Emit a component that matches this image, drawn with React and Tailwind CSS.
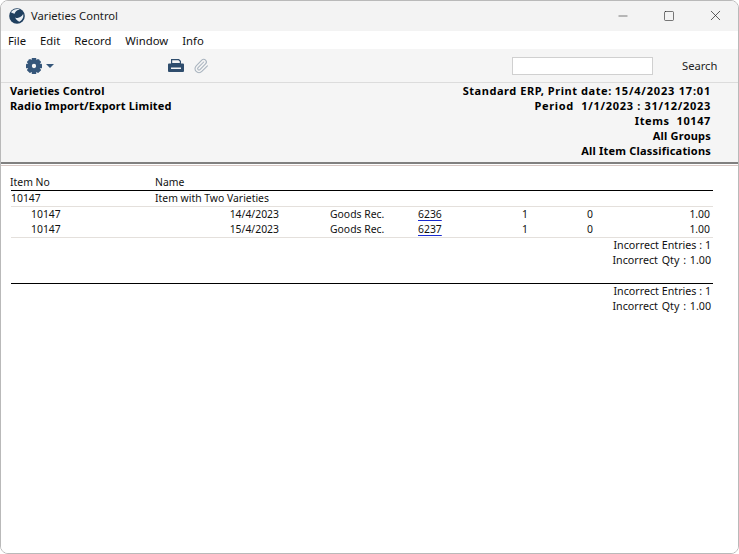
import React from 'react';
import { Minus, Paperclip, Square, X } from 'lucide-react';

function GearIcon() {
  const angles = [0, 45, 90, 135, 180, 225, 270, 315];
  return (
    <svg width="16" height="16" viewBox="0 0 24 24" fill="#35567a">
      {angles.map((a) => (
        <rect key={a} x="8.500" y="0" width="7" height="6" rx="1" transform={`rotate(${a} 12 12)`} />
      ))}
      <circle cx="12" cy="12" r="6.500" fill="none" stroke="#35567a" strokeWidth="6.500" />
    </svg>
  );
}

function PrintIcon() {
  return (
    <svg width="16" height="13" viewBox="0 0 16 13">
      <path d="M3 0h8l2 2v3H3zM4.200 1.200v2.800h7.600V2.600l-1.400-1.400z" fillRule="evenodd" fill="#2f4d6d" />
      <path d="M1 4.500h14a1 1 0 0 1 1 1V12a1 1 0 0 1-1 1H1a1 1 0 0 1-1-1V5.500a1 1 0 0 1 1-1z" fill="#2f4d6d" />
      <path d="M3 8.500h10v1.500H3z" fill="#f5f5f5" />
    </svg>
  );
}

function AppLogo() {
  return (
    <svg width="16" height="16" viewBox="0 0 17 17">
      <circle cx="8.500" cy="8.500" r="8.300" fill="#1f3f5f" />
      <path d="M2 4.500C4.500 1.500 8 .5 11.500 1.500 8.500 2 6.500 3.500 6 6c-1 0-2.500-.5-4-1.500z" fill="#e8eef4" />
      <path d="M6.500 10c3 1.300 6.500.3 8.500-3.500.8 3-.5 6.500-4 8-2-.8-3.800-2.500-4.500-4.500z" fill="#e8eef4" />
    </svg>
  );
}

function Row({ no, date, num }) {
  return (
    <div className="flex h-[15px] items-center">
      <span className="w-[125px] pl-[20px]">{no}</span>
      <span className="w-[143px] text-right">{date}</span>
      <span className="ml-[51px] w-[88px]">Goods Rec.</span>
      <span className="w-[60px] underline decoration-[#1a2bd0] underline-offset-[2px]">{num}</span>
      <span className="w-[50px] text-right">1</span>
      <span className="w-[65px] text-right">0</span>
      <span className="flex-1 pr-[3px] text-right">1.00</span>
    </div>
  );
}

function Totals() {
  return (
    <>
      <div className="h-[15px] text-[10.7px]">Incorrect Entries : 1</div>
      <div className="h-[15px] text-[10.7px] [word-spacing:1px]">Incorrect Qty : 1.00</div>
    </>
  );
}

export default function App() {
  return (
    <div className="flex h-[554px] w-[739px] flex-col overflow-hidden rounded-lg border border-[#b9b9b9] bg-white font-['Noto_Sans','Liberation_Sans',sans-serif] text-[10.4px] leading-[15px] text-[#111]">
      {/* title bar */}
      <div className="flex h-[30px] items-center bg-[#f3f3f3] pb-[1px]">
        <span className="ml-[8px] mr-[6px] flex"><AppLogo /></span>
        <span className="font-['Open_Sans',sans-serif] text-[11.2px] text-[#1a1a1a]">Varieties Control</span>
        <div className="ml-auto flex items-center text-[#222]">
          <span className="flex w-[46px] justify-center"><Minus size={14} strokeWidth={1} /></span>
          <span className="flex w-[46px] justify-center"><Square size={12} strokeWidth={1.2} /></span>
          <span className="flex w-[46px] justify-center"><X size={17} strokeWidth={1} /></span>
        </div>
      </div>

      {/* menu */}
      <div className="flex h-[18px] items-center gap-[14px] bg-white pl-[7px] font-['Open_Sans',sans-serif] text-[11.3px]">
        <span>File</span>
        <span>Edit</span>
        <span>Record</span>
        <span>Window</span>
        <span>Info</span>
      </div>

      {/* toolbar */}
      <div className="flex h-[34px] items-center border-b border-[#dcdcdc] bg-[#f5f5f5]">
        <span className="ml-[25px] flex"><GearIcon /></span>
        <span className="ml-[4px] h-0 w-0 border-x-[4px] border-t-[4px] border-x-transparent border-t-[#35567a]" />
        <span className="ml-[114px] flex"><PrintIcon /></span>
        <span className="ml-[9px] flex text-[#a9b4bf]"><Paperclip size={16} strokeWidth={1.6} /></span>
        <input className="ml-auto h-[18px] w-[141px] border border-[#d0d0d0] bg-white" />
        <span className="ml-[29px] mr-[22px] w-[34px] font-['Open_Sans',sans-serif] text-[11.2px] text-[#222]">Search</span>
      </div>

      {/* report header */}
      <div className="flex h-[81px] justify-between border-b-2 border-[#808080] bg-[#f5f5f5] pl-[9px] pr-[27px] text-[11px] font-bold text-black">
        <div className="tracking-[0.15px]">
          <div>Varieties Control</div>
          <div>Radio Import/Export Limited</div>
        </div>
        <div className="text-right">
          <div>
            <span className="tracking-[0.56px]">Standard ERP, Print date:</span>{' '}
            <span className="tracking-[0.8px]">15/4/2023 17:01</span>
          </div>
          <div className="tracking-[0.7px]">Period&nbsp; 1/1/2023 : 31/12/2023</div>
          <div className="tracking-[0.6px]">Items&nbsp; 10147</div>
          <div className="tracking-[0.2px]">All Groups</div>
          <div className="tracking-[0.2px]">All Item Classifications</div>
        </div>
      </div>
      <div className="mt-[1px] h-[1px] bg-[#d8c8c4]" />

      {/* report body */}
      <div className="flex-1 bg-white pl-[10px] pr-[25px] pt-[8px]">
        <div className="-ml-[1px] flex h-[16px] items-center">
          <span className="w-[145px]">Item No</span>
          <span>Name</span>
        </div>
        <div className="flex h-[16px] items-center border-t border-black">
          <span className="w-[144px]">10147</span>
          <span>Item with Two Varieties</span>
        </div>
        <div className="border-y border-[#e4e0dc]">
          <Row no="10147" date="14/4/2023" num="6236" />
          <Row no="10147" date="15/4/2023" num="6237" />
        </div>
        <div className="flex flex-col items-end pr-[2px]">
          <Totals />
        </div>
        <div className="mt-[15px] flex flex-col items-end border-t border-black pr-[2px]">
          <Totals />
        </div>
      </div>
    </div>
  );
}
